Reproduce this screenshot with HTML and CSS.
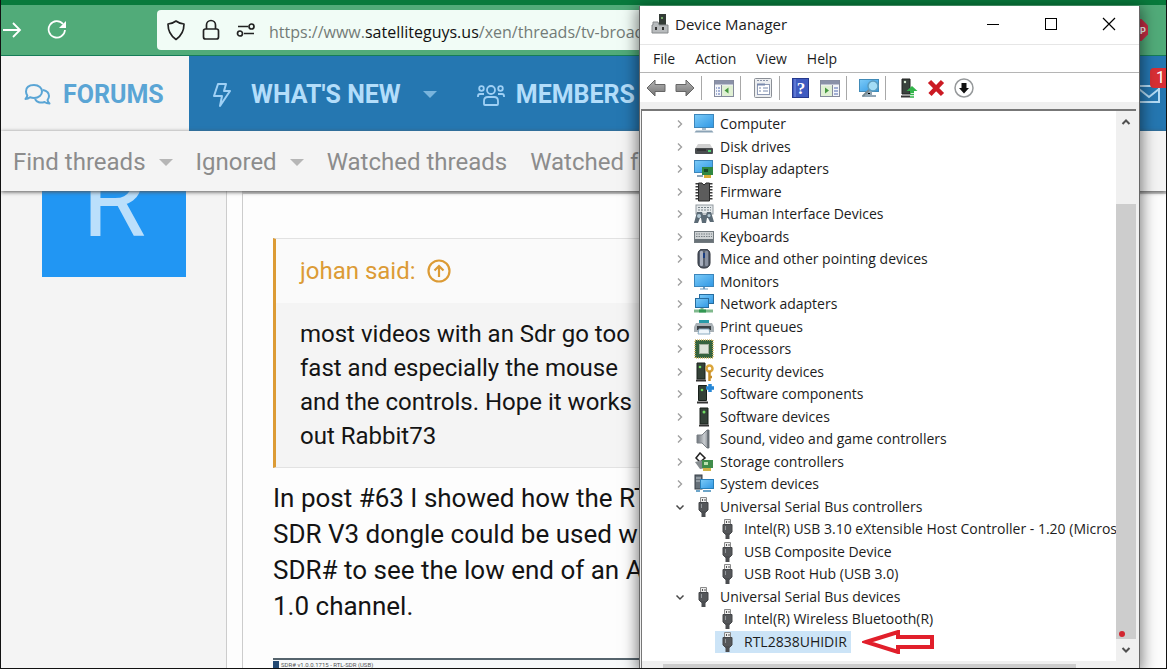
FILE: index.html
```html
<!DOCTYPE html>
<html lang="en">
<head>
<meta charset="utf-8">
<title>SatelliteGuys and Device Manager</title>
<link rel="stylesheet" href="styles.css">
</head>
<body>
<svg class="defs" aria-hidden="true">
  <defs>
    <linearGradient id="screen" x1="0" y1="0" x2="1" y2="1"><stop offset="0" stop-color="#7ccbf8"/><stop offset="1" stop-color="#2f97e4"/></linearGradient>
    <linearGradient id="metal" x1="0" y1="0" x2="1" y2="0"><stop offset="0" stop-color="#6d737a"/><stop offset="0.6" stop-color="#c8ccd0"/><stop offset="1" stop-color="#80868c"/></linearGradient>
    <linearGradient id="arrow" x1="0" y1="0" x2="0" y2="1"><stop offset="0" stop-color="#b5b5b5"/><stop offset="1" stop-color="#747474"/></linearGradient>
  </defs>
  <symbol id="i-right" viewBox="0 0 12 12"><path d="M4 2.500l3.500 3.500L4 9.500" fill="none" stroke="#a0a0a0" stroke-width="1.400"/></symbol>
  <symbol id="i-down" viewBox="0 0 12 12"><path d="M2.500 4.500L6 8l3.500-3.500" fill="none" stroke="#484848" stroke-width="1.500"/></symbol>
  <symbol id="i-computer" viewBox="0 0 20 20"><rect x=".5" y=".5" width="19" height="13" fill="url(#screen)" stroke="#3c86bb"/><path d="M8 14h4v2H8z" fill="#a9bac8"/><path d="M2 16.500h16l1.500 2H.5z" fill="#8ba3b6"/></symbol>
  <symbol id="i-disk" viewBox="0 0 20 20"><path d="M4 7h12l3 5H1z" fill="#d0d0d0"/><rect x="1" y="11" width="18" height="6" rx="1" fill="#4a4d4f"/><path d="M3 13h9" stroke="#1d1f20"/><rect x="14" y="13" width="3" height="2" fill="#52d273"/></symbol>
  <symbol id="i-display" viewBox="0 0 20 20"><rect x=".5" y="1.500" width="18" height="12" fill="url(#screen)" stroke="#3c86bb"/><path d="M3 17h6" stroke="#8ba3b6" stroke-width="2"/><rect x="8" y="8" width="11" height="8" fill="#2f8742"/><rect x="10" y="10" width="4" height="3" fill="#184a27"/><path d="M10 17.500h7" stroke="#d7ae38" stroke-width="3"/></symbol>
  <symbol id="i-firmware" viewBox="0 0 20 20"><path d="M3 1v18M17 1v18" stroke="#3c3c3c" stroke-width="3" stroke-dasharray="1.500 1.500"/><path d="M4.500 1H8q2 3.500 4 0h3.500v18h-11z" fill="#5c5c5c" stroke="#2a2a2a"/></symbol>
  <symbol id="i-hid" viewBox="0 0 20 20"><rect x="2" y="1" width="17" height="9" fill="#e4e8ea" stroke="#929aa0"/><path d="M4 3.500h13M4 6h13" stroke="#78838a" stroke-dasharray="2 1"/><path d="M3 8h5l1 3h3l1-3h4l3 10h-4l-2-4h-1l-1 5H8l-1-5H6l-2 5H0z" fill="#5b6a75"/><circle cx="5" cy="12" r="2" fill="#b5cad6"/><circle cx="15" cy="11.500" r="1.500" fill="#b5cad6"/></symbol>
  <symbol id="i-keyboard" viewBox="0 0 20 20"><rect x=".5" y="4.500" width="19" height="11" fill="#cfd3d5" stroke="#737b80"/><path d="M2 7h16M2 9.500h16" stroke="#767e83" stroke-dasharray="1.500 1"/><path d="M1 13.500h18" stroke="#687177" stroke-width="3"/></symbol>
  <symbol id="i-mouse" viewBox="0 0 20 20"><rect x="4" y="0" width="12" height="19" rx="5" fill="#59616e" stroke="#282d36"/><rect x="6" y="2" width="3" height="15" rx="1" fill="#aab1bf"/><rect x="11" y="2" width="3" height="15" rx="1" fill="#8991a0"/><rect x="9" y="4" width="2" height="5" fill="#193d80"/></symbol>
  <symbol id="i-monitor" viewBox="0 0 20 20"><rect x=".5" y="2.500" width="19" height="12" fill="url(#screen)" stroke="#3c86bb"/><path d="M9 15h2v1.500h3v1H6v-1h3z" fill="#6d9cc0"/></symbol>
  <symbol id="i-network" viewBox="0 0 20 20"><rect x="5.500" y=".5" width="14" height="9" fill="url(#screen)" stroke="#276d9f"/><rect x="1.500" y="4.500" width="13" height="9" fill="url(#screen)" stroke="#276d9f"/><path d="M8 14v3M0 17h19" stroke="#80b98d" stroke-width="3"/><path d="M5 17h7" stroke="#319752" stroke-width="3"/></symbol>
  <symbol id="i-printer" viewBox="0 0 20 20"><path d="M5 3h10v5H5z" fill="#289aa8"/><path d="M2 6h16l2 4v5H0v-5z" fill="#a9b1b6"/><path d="M3 9h14v4H3z" fill="#3c4246"/><path d="M5 12h10l1 5H4z" fill="#eef5fa" stroke="#8cabc0"/></symbol>
  <symbol id="i-cpu" viewBox="0 0 20 20"><rect x="1" y="1" width="18" height="18" fill="#315f3e" stroke="#d2b967" stroke-width="1.500" stroke-dasharray="1 1"/><rect x="2" y="2" width="16" height="16" fill="#35633f"/><rect x="5.500" y="5.500" width="9" height="9" fill="#dce4da" stroke="#a3b09f"/></symbol>
  <symbol id="i-tower" viewBox="0 0 20 20"><path d="M6 1h8v16H6z" fill="#344138" stroke="#18201b"/><path d="M5 18.500h10" stroke="#333" stroke-width="2"/><circle cx="10" cy="5" r="1.500" fill="#6fdc61"/></symbol>
  <symbol id="i-security" viewBox="0 0 20 20"><path d="M3 1h8v16H3z" fill="#344138" stroke="#18201b"/><path d="M2 18.500h10" stroke="#333" stroke-width="2"/><circle cx="6" cy="5" r="1.300" fill="#6fdc61"/><circle cx="15.500" cy="6.500" r="3" fill="none" stroke="#dba63c" stroke-width="2.500"/><path d="M15.500 9v10M16 15h2" stroke="#c78e28" stroke-width="2.500"/></symbol>
  <symbol id="i-component" viewBox="0 0 20 20"><path d="M4.500 1.500h8v15h-8z" fill="#344138" stroke="#18201b"/><path d="M3 18.500h11" stroke="#333" stroke-width="2"/><circle cx="8" cy="6" r="1.300" fill="#6fdc61"/><path d="M16 0v8M12 4h8" stroke="#2687d6" stroke-width="3.500"/></symbol>
  <symbol id="i-sound" viewBox="0 0 20 20"><path d="M3 6h5l5-5h2v18h-2l-5-5H3z" fill="url(#metal)" stroke="#7a8086"/><path d="M14 1v18" stroke="#4d555b"/></symbol>
  <symbol id="i-storage" viewBox="0 0 20 20"><path d="M6 1l5 5-5 4-4-4z" fill="#fff" stroke="#222" stroke-width="1.500"/><path d="M1 10l8-2 4 8-7 1z" fill="#858b8e"/><path d="M8 8h11v8H8z" fill="#408c4b"/><path d="M10 10h4v3h-4z" fill="#bce3b0"/><path d="M9 17.500h8" stroke="#cfb348" stroke-width="3"/></symbol>
  <symbol id="i-system" viewBox="0 0 20 20"><rect x="1" y="1" width="7" height="14" fill="#667079" stroke="#343d44"/><path d="M2 4h5M2 7h5" stroke="#bdc6cc"/><rect x="6.500" y="5.500" width="13" height="9" fill="url(#screen)" stroke="#287fb9"/><path d="M9 17h8M2 17h4" stroke="#6da5c9" stroke-width="2"/></symbol>
  <symbol id="i-usb" viewBox="0 0 20 20"><path d="M6.500 .5h6V6h-6z" fill="#eee" stroke="#8a8a8a"/><path d="M8.500 2v2M11 2v2" stroke="#555"/><path d="M5 5.500h9v7.500L11.500 15.500h-4L5 13z" fill="#55575a" stroke="#444649"/><path d="M9.500 14v6" stroke="#4b4d50" stroke-width="4"/><path d="M7.500 7v4" stroke="#92969a"/></symbol>
</svg>

<div class="desktop">
  <div class="browser">
    <div class="tabstrip"></div>
    <div class="toolbar">
      <button class="plain forward" aria-label="Forward"><svg width="20" height="20" viewBox="0 0 20 20"><path d="M0 10h17M10 3l7 7-7 7" fill="none" stroke="#fff" stroke-width="1.800"/></svg></button>
      <button class="plain reload" aria-label="Reload"><svg width="20" height="20" viewBox="0 0 20 20"><path d="M16 4A8.200 8.200 0 1 0 18 10" fill="none" stroke="#fff" stroke-width="1.700"/><path d="M19 1v7h-7z" fill="#fff"/></svg></button>
      <div class="address">
        <svg width="20" height="22" viewBox="0 0 20 22"><path d="M10 2q4 3 8 3 0 10-8 15.500Q2 15 2 5q4 0 8-3z" fill="none" stroke="#222" stroke-width="1.700" stroke-linejoin="round"/></svg>
        <svg width="20" height="22" viewBox="0 0 20 22"><rect x="2.500" y="10" width="15" height="10" rx="2" fill="none" stroke="#222" stroke-width="1.700"/><path d="M5.500 10V6a4.500 4.500 0 0 1 9 0v4" fill="none" stroke="#222" stroke-width="1.700"/></svg>
        <svg width="20" height="22" viewBox="0 0 20 22"><g fill="none" stroke="#222" stroke-width="1.700"><path d="M2 7.500h10M8 14.500h10"/><circle cx="15.500" cy="7.500" r="2.500"/><circle cx="4" cy="14.500" r="2.500"/></g></svg>
        <span class="url">https://www.<b>satelliteguys.us</b>/xen/threads/tv-broadcast</span>
      </div>
      <svg class="abp" width="22" height="22" viewBox="0 0 22 22" role="img" aria-label="ABP"><path d="M6.500 0h9L22 6.500v9L15.500 22h-9L0 15.500v-9z" fill="#c72d45"/><text x="11" y="15" text-anchor="middle" class="abp-text">ABP</text></svg>
    </div>
    <nav class="mainnav">
      <a class="tab active" href="#"><svg width="27" height="24" viewBox="0 0 27 24"><g fill="none" stroke="#5aa5d5" stroke-width="2" stroke-linejoin="round"><path d="M10 2c5 0 8 3 8 6.500S15 15 10 15q-2 0-4-.700Q4 16 1.500 16 3 14.500 3.300 12.500 2 10.500 2 8.500 2 2 10 2z"/><path d="M19 7c4 .8 6 3 6 6q0 2-1.500 4 .5 2 2 3.500-3 0-5-1.500c-4 1.500-8 0-9.500-3"/></g></svg><span>FORUMS</span></a>
      <a class="tab" href="#"><svg width="20" height="26" viewBox="0 0 20 26"><path d="M6 2h8l-2 7h6L8 24l2-10H2z" fill="none" stroke="#9fd0f5" stroke-width="2" stroke-linejoin="round"/></svg><span class="new">WHAT'S NEW</span><i class="caret"></i></a>
      <a class="tab members" href="#"><svg width="28" height="24" viewBox="0 0 28 24"><g fill="none" stroke="#9fd0f5" stroke-width="1.800"><circle cx="14" cy="7" r="4"/><circle cx="4.500" cy="5.500" r="2.300"/><circle cx="23.500" cy="5.500" r="2.300"/><path d="M7 21v-3q0-4 4-4h6q4 0 4 4v3q0 1-1 1H8q-1 0-1-1zM1 14v-1q0-2 2-2h4M27 14v-1q0-2-2-2h-4"/></g></svg><span>MEMBERS</span></a>
      <a class="mail" href="#" aria-label="Inbox, 1 unread"><svg width="22" height="18" viewBox="0 0 22 18"><path d="M1 1h20v16H1zM1 4l10 8 10-8" fill="none" stroke="#b5dcf5" stroke-width="2"/></svg><span class="badge">1</span></a>
    </nav>
    <nav class="subnav">
      <a href="#">Find threads<i class="caret"></i></a>
      <a href="#">Ignored<i class="caret"></i></a>
      <a href="#">Watched threads</a>
      <a href="#">Watched forums</a>
    </nav>
    <main class="page">
      <aside class="user"><div class="avatar">R</div></aside>
      <article class="post">
        <blockquote class="quote">
          <a class="quote-head" href="#">johan said:<svg width="24" height="24" viewBox="0 0 24 24"><g fill="none" stroke="#dc9b35" stroke-width="2.200"><circle cx="12" cy="12" r="10.500"/><path d="M12 18V7M7.500 11.500L12 7l4.500 4.500"/></g></svg></a>
          <p>most videos with an Sdr go too<br>fast and especially the mouse<br>and the controls. Hope it works<br>out Rabbit73</p>
        </blockquote>
        <p class="text">In post #63 I showed how the RTL-<br>SDR V3 dongle could be used with<br>SDR# to see the low end of an ATSC<br>1.0 channel.</p>
        <div class="shot"><i></i><span>SDR# v1.0.0.1715 - RTL-SDR (USB)</span></div>
      </article>
    </main>
  </div>

  <section class="window" aria-label="Device Manager">
    <header class="titlebar">
      <svg width="18" height="20" viewBox="0 0 18 20"><rect x="8" y="0" width="7" height="12" fill="#333b36"/><circle cx="11" cy="4" r="1" fill="#8fd07d"/><path d="M2 8h5l1 3h9v8H1v-8h1z" fill="#b8bbbd" stroke="#86898b"/><path d="M5 13v3M12 13v3" stroke="#333" stroke-width="2"/></svg>
      <h1>Device Manager</h1>
      <button class="plain" aria-label="Minimize"><svg width="14" height="14"><path d="M1 7.500h12" stroke="#000"/></svg></button>
      <button class="plain" aria-label="Maximize"><svg width="14" height="14"><rect x="1.500" y="1.500" width="11" height="11" fill="none" stroke="#000"/></svg></button>
      <button class="plain" aria-label="Close"><svg width="14" height="14"><path d="M1 1l12 12M13 1L1 13" stroke="#000" stroke-width="1.200"/></svg></button>
    </header>
    <div class="menubar"><button class="plain">File</button><button class="plain">Action</button><button class="plain">View</button><button class="plain">Help</button></div>
    <div class="tools">
      <div class="group first">
        <button class="plain" aria-label="Back"><svg width="20" height="20" viewBox="0 0 20 20"><path d="M1 10l8-8v4.500h10v7H9V18z" fill="url(#arrow)" stroke="#666"/></svg></button>
        <button class="plain" aria-label="Forward"><svg width="20" height="20" viewBox="0 0 20 20"><path d="M19 10l-8-8v4.500H1v7h10V18z" fill="url(#arrow)" stroke="#666"/></svg></button>
      </div>
      <div class="group"><button class="plain" aria-label="Show console tree"><svg width="20" height="20" viewBox="0 0 20 20"><rect x=".5" y="2.500" width="19" height="16" fill="#f4f6fa" stroke="#858b9c"/><path d="M1 4.500h18" stroke="#8a91a8" stroke-width="4"/><path d="M7.500 7v11" stroke="#858b9c"/><path d="M2 10h4M2 13h4M2 16h4" stroke="#526bb0" stroke-dasharray="1 1 2 1"/><path d="M8 7.500h11v10.500H8z" fill="#e0f0d4"/><path d="M14.500 9.500v6L10.500 12.500z" fill="#47993f"/></svg></button></div>
      <div class="group"><button class="plain" aria-label="Properties"><svg width="20" height="20" viewBox="0 0 20 20"><rect x="1.500" y=".5" width="17" height="19" rx="1" fill="#eceef0" stroke="#8b8f96"/><path d="M4 2.500h12" stroke="#8992a8" stroke-dasharray="2 1"/><rect x="4.500" y="6.500" width="12" height="10" fill="#fff" stroke="#8d99b4"/><path d="M4 6.500h8" stroke="#7889ac" stroke-width="2"/><path d="M6 10h2M10 10h5M6 13h2M10 13h5" stroke="#7889ac"/></svg></button></div>
      <div class="group help">
        <button class="plain" aria-label="Help"><svg width="20" height="20" viewBox="0 0 20 20"><rect x="2.500" y=".5" width="16" height="19" fill="#3f5bc0" stroke="#26398d"/><path d="M5 1v18" stroke="#7d93e3"/><text x="11" y="16" text-anchor="middle" class="q">?</text></svg></button>
        <button class="plain" aria-label="Show action pane"><svg width="20" height="20" viewBox="0 0 20 20"><rect x=".5" y="2.500" width="19" height="16" fill="#f4f6fa" stroke="#858b9c"/><path d="M1 4.500h18" stroke="#8a91a8" stroke-width="4"/><path d="M1 7.500h11v10.500H1z" fill="#e0f0d4"/><path d="M12.500 7v11" stroke="#858b9c"/><path d="M14 10h4M14 13h4M14 16h4" stroke="#526bb0"/><path d="M5 9.500v6l4-3z" fill="#47993f"/></svg></button>
      </div>
      <div class="group"><button class="plain" aria-label="Scan for hardware changes"><svg width="20" height="20" viewBox="0 0 20 20"><rect x=".5" y="1.500" width="19" height="12" fill="url(#screen)" stroke="#418bb8"/><path d="M8 14h4v3H8zM3 18h14" stroke="#91a6b5" stroke-width="2"/><circle cx="14" cy="8" r="5" fill="#a3dcf5" stroke="#5a9cbf" stroke-width="1.500"/><path d="M10 12l-6 6" stroke="#75878f" stroke-width="2"/></svg></button></div>
      <div class="group last">
        <button class="plain" aria-label="Update driver"><svg width="20" height="20" viewBox="0 0 20 20"><path d="M4 1h8v15H4z" fill="#39423d" stroke="#222"/><path d="M3 18.500h9" stroke="#333" stroke-width="2"/><circle cx="7" cy="4" r="1.200" fill="#d6eacf"/><path d="M14 8l5.500 5H16v2h-4v-2H8.500z" fill="#32b44a"/><path d="M12 16.500h4M12 19h4" stroke="#32b44a" stroke-width="1.500"/></svg></button>
        <button class="plain" aria-label="Uninstall device"><svg width="20" height="20" viewBox="0 0 20 20"><path d="M3.500 3.500l13 13M16.500 3.500L4 16.500" stroke="#cb1a23" stroke-width="4.500"/></svg></button>
        <button class="plain" aria-label="Disable device"><svg width="20" height="20" viewBox="0 0 20 20"><circle cx="10" cy="10" r="9" fill="#fff" stroke="#96999b" stroke-width="1.500"/><path d="M7.500 5h5v5H15l-5 5.500L5 10h2.500z" fill="#111"/></svg></button>
      </div>
    </div>
    <div class="pane">
      <ul class="tree">
        <li><svg class="chev"><use href="#i-right"/></svg><svg class="ico"><use href="#i-computer"/></svg><span>Computer</span></li>
        <li><svg class="chev"><use href="#i-right"/></svg><svg class="ico"><use href="#i-disk"/></svg><span>Disk drives</span></li>
        <li><svg class="chev"><use href="#i-right"/></svg><svg class="ico"><use href="#i-display"/></svg><span>Display adapters</span></li>
        <li><svg class="chev"><use href="#i-right"/></svg><svg class="ico"><use href="#i-firmware"/></svg><span>Firmware</span></li>
        <li><svg class="chev"><use href="#i-right"/></svg><svg class="ico"><use href="#i-hid"/></svg><span>Human Interface Devices</span></li>
        <li><svg class="chev"><use href="#i-right"/></svg><svg class="ico"><use href="#i-keyboard"/></svg><span>Keyboards</span></li>
        <li><svg class="chev"><use href="#i-right"/></svg><svg class="ico"><use href="#i-mouse"/></svg><span>Mice and other pointing devices</span></li>
        <li><svg class="chev"><use href="#i-right"/></svg><svg class="ico"><use href="#i-monitor"/></svg><span>Monitors</span></li>
        <li><svg class="chev"><use href="#i-right"/></svg><svg class="ico"><use href="#i-network"/></svg><span>Network adapters</span></li>
        <li><svg class="chev"><use href="#i-right"/></svg><svg class="ico"><use href="#i-printer"/></svg><span>Print queues</span></li>
        <li><svg class="chev"><use href="#i-right"/></svg><svg class="ico"><use href="#i-cpu"/></svg><span>Processors</span></li>
        <li><svg class="chev"><use href="#i-right"/></svg><svg class="ico"><use href="#i-security"/></svg><span>Security devices</span></li>
        <li><svg class="chev"><use href="#i-right"/></svg><svg class="ico"><use href="#i-component"/></svg><span>Software components</span></li>
        <li><svg class="chev"><use href="#i-right"/></svg><svg class="ico"><use href="#i-tower"/></svg><span>Software devices</span></li>
        <li><svg class="chev"><use href="#i-right"/></svg><svg class="ico"><use href="#i-sound"/></svg><span>Sound, video and game controllers</span></li>
        <li><svg class="chev"><use href="#i-right"/></svg><svg class="ico"><use href="#i-storage"/></svg><span>Storage controllers</span></li>
        <li><svg class="chev"><use href="#i-right"/></svg><svg class="ico"><use href="#i-system"/></svg><span>System devices</span></li>
        <li><svg class="chev"><use href="#i-down"/></svg><svg class="ico"><use href="#i-usb"/></svg><span>Universal Serial Bus controllers</span></li>
        <li class="child"><svg class="ico"><use href="#i-usb"/></svg><span>Intel(R) USB 3.10 eXtensible Host Controller - 1.20 (Microsoft)</span></li>
        <li class="child"><svg class="ico"><use href="#i-usb"/></svg><span>USB Composite Device</span></li>
        <li class="child"><svg class="ico"><use href="#i-usb"/></svg><span>USB Root Hub (USB 3.0)</span></li>
        <li><svg class="chev"><use href="#i-down"/></svg><svg class="ico"><use href="#i-usb"/></svg><span>Universal Serial Bus devices</span></li>
        <li class="child"><svg class="ico"><use href="#i-usb"/></svg><span>Intel(R) Wireless Bluetooth(R)</span></li>
        <li class="child"><div class="selected"><svg class="ico"><use href="#i-usb"/></svg><span>RTL2838UHIDIR</span></div><svg class="pointer" width="72" height="24" viewBox="0 0 72 24"><path d="M4 12L36 2v5h34v10H36v5z" fill="#fff" stroke="#e11f2b" stroke-width="4"/></svg></li>
      </ul>
      <div class="vscroll">
        <button class="plain" aria-label="Scroll up"><svg width="12" height="12" viewBox="0 0 12 12"><path d="M2.500 8L6 4.500 9.500 8" fill="none" stroke="#505050" stroke-width="2"/></svg></button>
        <div class="vthumb"><i class="dot"></i></div>
        <button class="plain" aria-label="Scroll down"><svg width="12" height="12" viewBox="0 0 12 12"><path d="M2.500 4L6 7.500 9.500 4" fill="none" stroke="#505050" stroke-width="2"/></svg></button>
      </div>
      <div class="hscroll"><div class="hthumb"></div></div>
    </div>
  </section>
</div>
</body>
</html>
```

FILE: styles.css
```css
* { box-sizing: border-box; }
body { margin: 0; font-family: Roboto, "Liberation Sans", sans-serif; }
p, h1, ul, blockquote { margin: 0; padding: 0; }
a { color: inherit; text-decoration: none; }
svg { flex: none; }
.defs { position: absolute; width: 0; height: 0; }
.plain { display: flex; align-items: center; justify-content: center; padding: 0; border: 0; background: none; color: inherit; font: inherit; }

.desktop { position: relative; height: 100vh; overflow: hidden; border: solid #111; border-width: 0 1px 1px; }
.browser { display: flex; flex-direction: column; height: 100%; white-space: nowrap; }
.tabstrip { height: 5px; background: #087a3c; }
.toolbar { display: flex; align-items: center; height: 51px; background: #51ab79; border-bottom: 1px solid #167d58; }
.forward { margin-left: 2px; }
.reload { margin-left: 24px; }
.address { display: flex; flex: 1; align-items: center; gap: 15px; height: 40px; margin-left: 90px; padding-left: 9px; border-radius: 4px; background: #f1fcf6; overflow: hidden; }
.url { margin-left: -2px; padding-top: 3px; color: #737b77; font: 16px/24px "Open Sans", "Noto Sans", sans-serif; }
.url b { color: #111; font-weight: 400; }
.abp { margin: 0 18px 0 -4px; }
.abp-text { fill: #fff; font: bold 9px Roboto, sans-serif; }

.mainnav { display: flex; height: 75px; background: #2577b1; color: #b3ddfa; font-size: 25px; font-weight: 700; }
.tab { display: flex; align-items: center; padding: 2px 0 0 23px; gap: 12px; }
.tab.active { width: 188px; background: #f4f4f4; color: #5aa5d5; }
.new { margin: 0 10px 0 7px; }
.caret { border: 7px solid transparent; border-top-color: currentColor; border-bottom: 0; opacity: .6; }
.members { gap: 11px; padding-left: 40px; }
.mail { position: relative; margin: 29px 6px 0 auto; }
.mail svg { display: block; }
.badge { position: absolute; left: 12px; top: -17px; width: 24px; padding-left: 6px; border-radius: 4px; background: #d92f35; color: #fff; font-size: 16px; font-weight: 400; line-height: 20px; }

.subnav { position: relative; display: flex; align-items: center; gap: 23px; height: 60px; padding: 2px 0 0 12px; background: #f4f4f4; box-shadow: 0 1px 4px #555; color: #8c8c8c; font-size: 24px; }
.subnav a { display: flex; align-items: center; gap: 13px; }

.page { display: flex; flex: 1; min-height: 0; overflow: hidden; background: #fdfdfd; }
.user { width: 226px; background: #f4f4f4; border-right: 1px solid #ccc; }
.avatar { width: 144px; height: 144px; margin: -58px 0 0 41px; background: #2196f3; color: #bbdffb; font-size: 104px; line-height: 136px; text-align: center; }
.post { flex: 1; margin-left: 15px; padding: 44px 30px 0; border-left: 1px solid #ccc; border-top: 3px solid #d0d0d0; color: #141414; }
.quote { border: 1px solid #e2e2e2; border-left: 3px solid #dc9b35; background: #f4f4f4; font-size: 24px; line-height: 34px; }
.quote-head { display: flex; align-items: center; gap: 11px; height: 64px; padding-left: 24px; background: #fafafa; color: #dc9b35; }
.quote p { padding: 14px 24px; }
.text { margin-top: 12px; font-size: 26px; line-height: 36px; }
.shot { display: flex; align-items: center; gap: 2px; height: 12px; margin-top: 34px; border-top: 2px solid #56646d; background: #f7f9fa; color: #555; font-size: 6px; line-height: 8px; }
.shot i { width: 6px; height: 8px; background: #244a73; }

.window { position: absolute; left: 638px; right: 26px; top: 6px; bottom: 0; display: flex; flex-direction: column; border: solid #666; border-width: 0 1px; background: #f0f0f0; box-shadow: 0 3px 14px 2px rgba(0, 0, 0, .5); color: #1c1c1c; font: 14px/20px "Open Sans", "Noto Sans", sans-serif; }
.titlebar { display: flex; align-items: center; height: 39px; padding: 0 23px 2px 11px; gap: 44px; border-bottom: 1px solid #e6e6e6; background: #fff; }
.titlebar h1 { margin: 0 auto 0 -38px; font-size: 15px; font-weight: 400; }
.menubar { display: flex; gap: 20px; height: 28px; padding-left: 13px; border-bottom: 1px solid #b5b5b5; background: #fff; }
.tools { display: flex; align-items: center; height: 29px; background: #fff; }
.group { display: flex; gap: 10px; height: 24px; padding: 0 6px 0 12px; border-right: 1px solid #a8a8a8; }
.group.first { gap: 9px; padding-left: 6px; }
.group.help { padding-left: 10px; }
.group.last { gap: 8px; border: 0; }
.q { fill: #fff; font: bold 17px "Liberation Serif", serif; }
.pane { display: grid; flex: 1; grid-template-columns: 1fr 20px; grid-template-rows: 1fr 7px; min-height: 0; margin: 7px 3px 0 1px; border: solid #777; border-width: 2px 0 0 1px; }
.tree { display: grid; grid-auto-rows: 1fr; min-width: 0; padding: 2px 0 8px 32px; background: #fff; list-style: none; overflow: hidden; white-space: nowrap; }
.tree li { display: flex; align-items: center; min-height: 0; }
.chev { width: 12px; height: 12px; margin-right: 8px; }
.ico { width: 20px; height: 20px; margin-right: 6px; }
.tree .child { padding-left: 44px; }
.selected { display: flex; align-items: center; height: 100%; margin-left: -3px; padding: 0 4px 0 3px; background: #cce4f7; }
.pointer { margin-left: 11px; }
.vscroll { display: flex; flex-direction: column; }
.vscroll button { height: 22px; }
.vthumb { position: relative; flex: 1; margin-top: 71px; background: #cdcdcd; }
.dot { position: absolute; left: 3px; bottom: 2px; width: 6px; height: 6px; border-radius: 50%; background: #d22630; }
.hscroll { grid-column: 1 / 3; padding: 3px 60px 0 21px; }
.hthumb { height: 100%; background: #cdcdcd; }
```
